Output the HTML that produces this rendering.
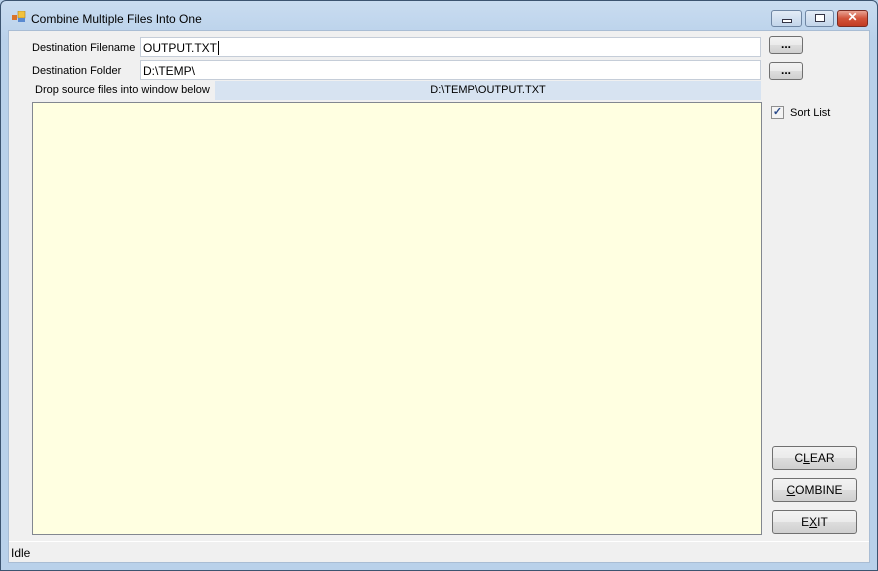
<!DOCTYPE html>
<html><head><style>
*{margin:0;padding:0;box-sizing:border-box}
body{width:878px;height:571px;overflow:hidden;background:#b9d1ea;font-family:"Liberation Sans",sans-serif;font-size:11px;color:#000;position:relative}
.frame{position:absolute;left:0;top:0;width:878px;height:571px;border:1px solid #3c5470;border-radius:6px 6px 0 0;background:linear-gradient(#c9dcf0,#b9d1ea 40px)}
.client{position:absolute;left:8px;top:30px;width:862px;height:533px;background:#f0f0f0;border:1px solid #a9bdd4}
.abs{position:absolute}
.title{left:31px;top:12px;font-size:12px;color:#000}
.tb{position:absolute;top:10px;height:17px;border:1px solid #6f86a3;border-radius:3px;background:linear-gradient(#e3ecf6,#c3d5ea)}
.input{position:absolute;height:20px;background:#fff;border:1px solid #c5cdd8;padding:3px 2px;font-size:12px}
.btn{position:absolute;border:1px solid #707070;border-radius:3px;background:linear-gradient(#f2f2f2 0,#ebebeb 50%,#dddddd 51%,#cfcfcf 100%);text-align:center;font-size:12px}
u{text-decoration:underline}
</style></head><body>
<div class="frame"></div>
<svg class="abs" style="left:12px;top:11px" width="14" height="12"><rect x="0" y="4" width="5" height="5" fill="#d9732a"/><rect x="6" y="0" width="7" height="7" fill="#f2c23c" stroke="#b08020" stroke-width="0.6"/><rect x="6" y="7" width="7" height="4" fill="#5a8ad0"/></svg>
<div class="abs title">Combine Multiple Files Into One</div>
<div class="tb" style="left:771px;width:31px"><div class="abs" style="left:10px;top:8px;width:10px;height:4px;border:1px solid #334;background:#fff"></div></div>
<div class="tb" style="left:805px;width:29px"><div class="abs" style="left:9px;top:3px;width:10px;height:8px;border:1px solid #334;background:#fff"></div></div>
<div class="tb" style="left:837px;width:31px;border-color:#7a2b22;background:linear-gradient(#e9a393,#d2533a 50%,#c23b22)"><div class="abs" style="left:0;top:-1px;width:29px;text-align:center;color:#fff;font-weight:bold;font-size:12px">✕</div></div>
<div class="client"></div>
<div class="abs" style="left:32px;top:42px">Destination Filename</div>
<div class="input" style="left:140px;top:37px;width:621px">OUTPUT.TXT<span style="border-left:1px solid #000;margin-left:1px"></span></div>
<div class="abs" style="left:32px;top:65px">Destination Folder</div>
<div class="input" style="left:140px;top:60px;width:621px">D:\TEMP\</div>
<div class="btn" style="left:769px;top:36px;width:34px;height:18px;font-weight:bold;line-height:14px">...</div>
<div class="btn" style="left:769px;top:62px;width:34px;height:18px;font-weight:bold;line-height:14px">...</div>
<div class="abs" style="left:35px;top:84px">Drop source files into window below</div>
<div class="abs" style="left:215px;top:81px;width:546px;height:19px;background:#d7e3f1;text-align:center;line-height:19px">D:\TEMP\OUTPUT.TXT</div>
<div class="abs" style="left:32px;top:102px;width:730px;height:433px;background:#ffffe1;border:1px solid #828790"></div>
<div class="abs" style="left:771px;top:106px;width:13px;height:13px;border:1px solid #8f8f8f;background:#f4f4f4;font-size:11px;line-height:11px;text-align:center;color:#2a4a8a;font-weight:bold">✓</div>
<div class="abs" style="left:790px;top:107px">Sort List</div>
<div class="btn" style="left:772px;top:446px;width:85px;height:24px;line-height:22px">C<u>L</u>EAR</div>
<div class="btn" style="left:772px;top:478px;width:85px;height:24px;line-height:22px"><u>C</u>OMBINE</div>
<div class="btn" style="left:772px;top:510px;width:85px;height:24px;line-height:22px">E<u>X</u>IT</div>
<div class="abs" style="left:9px;top:541px;width:860px;height:1px;background:#fff"></div>
<div class="abs" style="left:11px;top:546px;font-size:12px">Idle</div>
</body></html>
